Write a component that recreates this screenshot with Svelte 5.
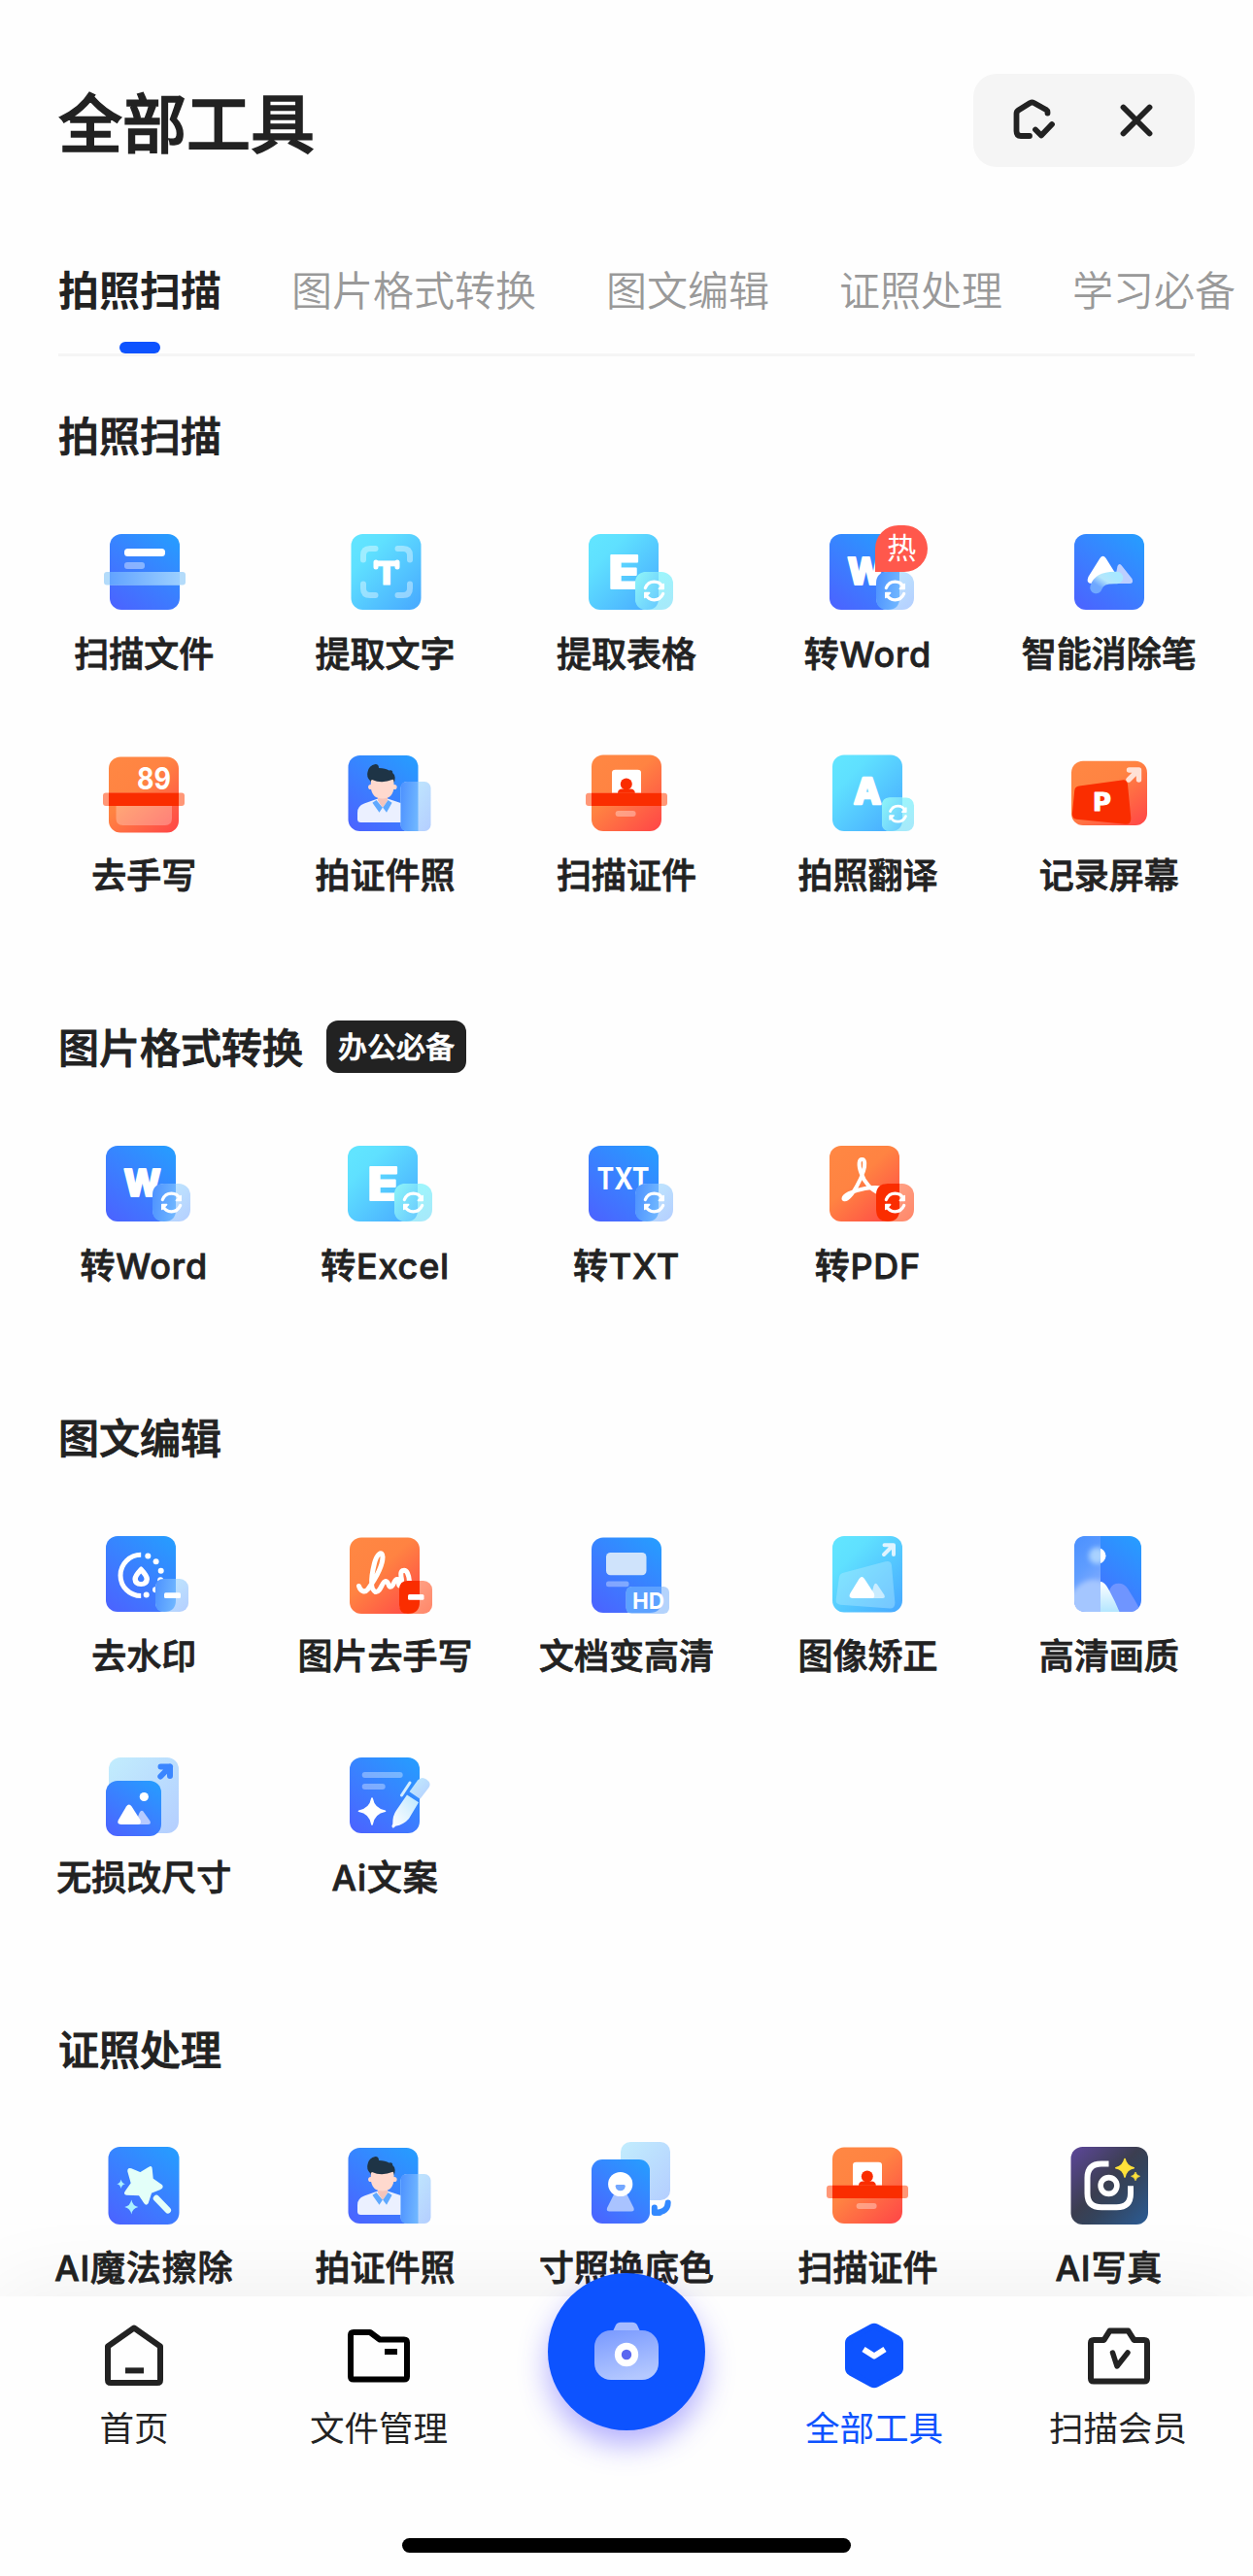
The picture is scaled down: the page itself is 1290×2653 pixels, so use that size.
<script>
  const tabs = ['拍照扫描', '图片格式转换', '图文编辑', '证照处理', '学习必备'];
  let activeTab = $state(0);

  const sections = [
    {
      title: '拍照扫描',
      tools: [
        { icon: 'scan', label: '扫描文件' },
        { icon: 'text', label: '提取文字' },
        { icon: 'excel', label: '提取表格' },
        { icon: 'word', label: '转Word', hot: true },
        { icon: 'eraser', label: '智能消除笔' },
        { icon: 'exam', label: '去手写' },
        { icon: 'portrait', label: '拍证件照' },
        { icon: 'idcard', label: '扫描证件' },
        { icon: 'translate', label: '拍照翻译' },
        { icon: 'record', label: '记录屏幕' }
      ]
    },
    {
      title: '图片格式转换',
      tag: '办公必备',
      tools: [
        { icon: 'word', label: '转Word' },
        { icon: 'excel', label: '转Excel' },
        { icon: 'txt', label: '转TXT' },
        { icon: 'pdf', label: '转PDF' }
      ]
    },
    {
      title: '图文编辑',
      tools: [
        { icon: 'watermark', label: '去水印' },
        { icon: 'handwriting', label: '图片去手写' },
        { icon: 'hd', label: '文档变高清' },
        { icon: 'correct', label: '图像矫正' },
        { icon: 'quality', label: '高清画质' },
        { icon: 'resize', label: '无损改尺寸' },
        { icon: 'copywriting', label: 'Ai文案' }
      ]
    },
    {
      title: '证照处理',
      tools: [
        { icon: 'magic', label: 'AI魔法擦除' },
        { icon: 'portrait', label: '拍证件照' },
        { icon: 'background', label: '寸照换底色' },
        { icon: 'idcard', label: '扫描证件' },
        { icon: 'aiphoto', label: 'AI写真' }
      ]
    }
  ];

  const navItems = [
    { icon: 'home', label: '首页' },
    { icon: 'folder', label: '文件管理' },
    { icon: 'camera' },
    { icon: 'tools', label: '全部工具' },
    { icon: 'member', label: '扫描会员' }
  ];
  let activeNav = $state('tools');

  const hasLatin = (label) => /[A-Za-z]/.test(label);
</script>

<!-- Shared gradients for the tool icons -->
<svg class="defs" width="0" height="0" aria-hidden="true">
  <defs>
    <linearGradient id="blue" x1="0.85" y1="0" x2="0.15" y2="1">
      <stop offset="0" stop-color="#279bff" />
      <stop offset="0.5" stop-color="#3a80ff" />
      <stop offset="1" stop-color="#4a65ff" />
    </linearGradient>
    <linearGradient id="cyan" x1="0.1" y1="0.1" x2="0.9" y2="0.95">
      <stop offset="0" stop-color="#61e4ff" />
      <stop offset="0.2" stop-color="#5fe0ff" />
      <stop offset="1" stop-color="#49adff" />
    </linearGradient>
    <linearGradient id="orange" x1="0.1" y1="0" x2="0.95" y2="1">
      <stop offset="0" stop-color="#ff8743" />
      <stop offset="0.4" stop-color="#ff8342" />
      <stop offset="1" stop-color="#ff4747" />
    </linearGradient>
    <linearGradient id="pale" x1="0" y1="0" x2="1" y2="1">
      <stop offset="0" stop-color="#c2edfd" />
      <stop offset="1" stop-color="#b4ceff" />
    </linearGradient>
    <linearGradient id="glassBlue" x1="0" y1="0.3" x2="1" y2="0.5">
      <stop offset="0" stop-color="#4f93ff" />
      <stop offset="1" stop-color="#6fb6ff" />
    </linearGradient>
    <linearGradient id="glassCyan" x1="0" y1="0" x2="1" y2="1">
      <stop offset="0" stop-color="#8ff6f8" />
      <stop offset="1" stop-color="#66c8ff" />
    </linearGradient>
    <linearGradient id="paleCyan" x1="0" y1="0" x2="0.6" y2="1">
      <stop offset="0" stop-color="#99fbfd" />
      <stop offset="1" stop-color="#a6eafa" />
    </linearGradient>
    <linearGradient id="paleOrange" x1="0" y1="0" x2="1" y2="1">
      <stop offset="0" stop-color="#ffab90" />
      <stop offset="1" stop-color="#ff8668" />
    </linearGradient>
    <linearGradient id="band" x1="0" y1="0" x2="1" y2="0">
      <stop offset="0" stop-color="#62a3ff" />
      <stop offset="1" stop-color="#9bcfff" />
    </linearGradient>
    <linearGradient id="brush" x1="1" y1="0" x2="0" y2="0.7">
      <stop offset="0" stop-color="#a9e8ff" />
      <stop offset="0.5" stop-color="#b5e6fb" />
      <stop offset="1" stop-color="#6fa8ff" />
    </linearGradient>
    <linearGradient id="peak" x1="0" y1="0" x2="0" y2="1">
      <stop offset="0" stop-color="#ffffff" />
      <stop offset="1" stop-color="#b4e6ff" />
    </linearGradient>
    <linearGradient id="pen" x1="1" y1="0" x2="0" y2="1">
      <stop offset="0" stop-color="#b9e7ff" />
      <stop offset="0.5" stop-color="#e0f3ff" />
      <stop offset="1" stop-color="#ffffff" />
    </linearGradient>
    <linearGradient id="frost" x1="0" y1="0" x2="0.3" y2="1">
      <stop offset="0" stop-color="#4a90ff" />
      <stop offset="0.5" stop-color="#5f9dff" />
      <stop offset="1" stop-color="#8eb2ff" />
    </linearGradient>
    <linearGradient id="night" x1="0" y1="0" x2="1" y2="1">
      <stop offset="0" stop-color="#5d479b" />
      <stop offset="0.45" stop-color="#3b3e50" />
      <stop offset="0.6" stop-color="#34435b" />
      <stop offset="1" stop-color="#2b5c95" />
    </linearGradient>
    <linearGradient id="lens" x1="0.2" y1="0" x2="0.5" y2="1">
      <stop offset="0" stop-color="#7b9bff" />
      <stop offset="1" stop-color="#b4c8ff" />
    </linearGradient>
    <filter id="soft" x="-40%" y="-40%" width="180%" height="180%">
      <feGaussianBlur stdDeviation="2.6" />
    </filter>
    <clipPath id="frostArea">
      <path d="M36 6H21Q9 6 9 18V72Q9 84 21 84H36Z" />
    </clipPath>
    <clipPath id="qualityCard">
      <rect x="36" y="6" width="42" height="78" />
    </clipPath>
    <clipPath id="qualityRound">
      <rect x="9" y="6" width="69" height="78" rx="12" />
    </clipPath>
  </defs>
</svg>

{#snippet arrows()}
  <g fill="none" stroke="#fff" stroke-width="3.2" stroke-linecap="round">
    <path d="M64.3 61.6C66.3 56.9 69.4 55.2 73.5 55.2C77.6 55.2 80.6 57.4 82 60.6" />
    <path d="M82.7 67.4C80.7 72.1 77.6 73.8 73.5 73.8C69.4 73.8 66.4 71.6 65 68.4" />
  </g>
  <path fill="#fff" stroke="#fff" stroke-width="1.6" stroke-linejoin="round" d="M83.2 57.6V62.4H78.4ZM63.8 71.4V66.6H68.6Z" />
{/snippet}

{#snippet syncBadge(tone)}
  {@const pale = { blue: 'url(#pale)', cyan: 'url(#paleCyan)', orange: 'url(#paleOrange)' }}
  {@const glass = { blue: 'url(#glassBlue)', cyan: 'url(#glassCyan)', orange: '#fa2d00' }}
  <rect x="54" y="45" width="39" height="39" rx="12" fill={pale[tone]} />
  <path d="M66 45H78V72Q78 84 66 84Q54 84 54 72V57Q54 45 66 45Z" fill={glass[tone]} />
  {@render arrows()}
{/snippet}

{#snippet toolIcon(name)}
  <svg class="tool-icon" viewBox="0 0 90 90" aria-hidden="true">
    {#if name === 'scan'}
      <rect x="10" y="6" width="72" height="78" rx="12" fill="url(#blue)" />
      <rect x="25" y="21" width="42" height="8" rx="3.5" fill="#fff" />
      <rect x="25" y="35" width="21" height="7" rx="3" fill="#fff" opacity="0.4" />
      <rect x="4" y="45" width="84" height="13.5" rx="3" fill="#b3dbfa" />
      <rect x="10" y="45" width="72" height="13.5" fill="url(#band)" />
    {:else if name === 'text'}
      <rect x="9.5" y="6" width="72" height="78" rx="12" fill="url(#cyan)" />
      <path
        d="M22 32.5V28Q22 21 29 21H34.5M57.5 21H63Q70 21 70 28V32.5M70 57.5V62Q70 69 63 69H57.5M34.5 69H29Q22 69 22 62V57.5"
        fill="none" stroke="#fff" stroke-width="6" stroke-linecap="round" opacity="0.4" />
      <text class="glyph" x="33.5" y="57.5" font-size="33" textLength="25" lengthAdjust="spacingAndGlyphs" stroke-width="1">T</text>
      <path d="M35 35V40M57 35V40" stroke="#fff" stroke-width="5" stroke-linecap="round" />
    {:else if name === 'excel'}
      <rect x="6" y="6" width="72" height="78" rx="12" fill="url(#cyan)" />
      <text class="glyph" x="26.5" y="62" font-size="46.5" textLength="32" lengthAdjust="spacingAndGlyphs" stroke-width="2">E</text>
      {@render syncBadge('cyan')}
    {:else if name === 'word'}
      <rect x="6" y="6" width="72" height="78" rx="12" fill="url(#blue)" />
      <text class="glyph" x="24.5" y="58.3" font-size="38.5" textLength="38" lengthAdjust="spacingAndGlyphs" stroke-width="2.2">W</text>
      {@render syncBadge('blue')}
    {:else if name === 'txt'}
      <rect x="6" y="6" width="72" height="78" rx="12" fill="url(#blue)" />
      <text class="glyph semi" x="14.5" y="51.3" font-size="31" textLength="54" lengthAdjust="spacingAndGlyphs">TXT</text>
      {@render syncBadge('blue')}
    {:else if name === 'pdf'}
      <rect x="6" y="6" width="72" height="78" rx="12" fill="url(#orange)" />
      <path
        d="M40 20C36 19 35.5 26 38.5 34C41.5 43 49 52 56.5 54C62 55.5 64 51 59 49.5C50 47.5 35 51 26 55C18 59 20 63 24 60.5C31 56 38.5 40 41 32C43 25 42.5 20.5 40 20Z"
        fill="none" stroke="#fff" stroke-width="4" stroke-linejoin="round" />
      {@render syncBadge('orange')}
    {:else if name === 'eraser'}
      <rect x="9" y="6" width="72" height="78" rx="12" fill="url(#blue)" />
      <path d="M53.5 39Q55.5 35 58.2 39L68.5 52Q70.5 57 66 57H50Z" fill="#bccfff" />
      <path d="M35.4 31Q38.5 26.5 41.6 31L53.5 50Q56 57 50 57H27Q20.5 57 23.5 50Z" fill="#fff" />
      <path d="M31.5 61C34 53 41 50.5 53 51" fill="none" stroke="url(#brush)" stroke-width="12.5" stroke-linecap="round" />
    {:else if name === 'exam'}
      <rect x="9" y="7.5" width="72" height="78" rx="12" fill="url(#orange)" />
      <text class="glyph semi" x="38" y="40.8" font-size="31" textLength="35" lengthAdjust="spacingAndGlyphs">89</text>
      <rect x="3" y="44.5" width="84" height="13.5" rx="3" fill="#ff9777" />
      <rect x="9" y="44.5" width="72" height="13.5" fill="#fa2d00" />
      <path d="M16.5 58H74V71Q74 78 67 78H23.5Q16.5 78 16.5 71Z" fill="#fff" opacity="0.28" />
    {:else if name === 'portrait'}
      <rect x="6.5" y="6" width="72" height="78" rx="12" fill="url(#blue)" />
      <path d="M16 71.5V65Q16 58 23 55.5L37 50.5H47L62 55.5V75H19.5Q16 75 16 71.5Z" fill="#ebf0ff" />
      <path d="M37 46H47V52.5L42 60L37 52.5Z" fill="#f5c4bb" />
      <path d="M35.5 52L31.4 54.8L38.5 64.7L42 59.5L46 64.7L51.6 54.8L47.5 52L42 60Z" fill="#5fa9ff" />
      <circle cx="29.7" cy="38.5" r="2.6" fill="#ffd6cb" />
      <circle cx="54" cy="38.5" r="2.6" fill="#ffd6cb" />
      <path d="M29.8 30H53.5V39Q52.5 50.5 41.7 50.5Q31 50.5 29.8 39Z" fill="#ffd9ce" />
      <path d="M29 34.5V32Q25 28 26.5 23Q27.5 16.5 34.5 15Q38 15.2 38 19Q45 19.3 48.5 21.5Q52.5 20.5 52.2 24Q55 26 54.7 29L54 34.5Q53.3 31 52.5 30.8Q41 35.5 31 31Q29.3 31.5 29 34.5Z" fill="#1e3446" />
      <rect x="60.5" y="33" width="31" height="51" rx="6.5" fill="url(#pale)" />
      <path d="M67 33H78.5V84H67Q60.5 84 60.5 77.5V39.5Q60.5 33 67 33Z" fill="url(#glassBlue)" />
    {:else if name === 'idcard'}
      <rect x="9" y="5.5" width="72" height="78.5" rx="12" fill="url(#orange)" />
      <path d="M30 45V24Q30 20.7 33.5 20.7H56.5Q60 20.7 60 24V45Z" fill="#fff" />
      <circle cx="44.8" cy="35.5" r="6" fill="#fa2d00" />
      <path d="M36 45Q36 40.5 40.5 40.5H49Q53.8 40.5 53.8 45Z" fill="#fa2d00" />
      <rect x="3" y="44.7" width="84" height="13.3" rx="3" fill="#ff9777" />
      <rect x="9" y="44.7" width="72" height="13.3" fill="#fa2d00" />
      <rect x="33.6" y="63" width="21" height="6" rx="3" fill="#fff" opacity="0.35" />
    {:else if name === 'translate'}
      <rect x="9" y="5.5" width="72" height="78.5" rx="12" fill="url(#cyan)" />
      <text class="glyph" x="31" y="55.5" font-size="37" textLength="28" lengthAdjust="spacingAndGlyphs" stroke-width="2.6">A</text>
      <rect x="60" y="49.5" width="33" height="34.5" rx="8" fill="url(#paleCyan)" />
      <path d="M68 49.5H81V72Q81 84 69 84H68Q60 84 60 76V57.5Q60 49.5 68 49.5Z" fill="url(#glassCyan)" />
      <g transform="translate(12.5 10) scale(0.87)">{@render arrows()}</g>
    {:else if name === 'record'}
      <rect x="6" y="11.7" width="78" height="66.3" rx="12" fill="url(#orange)" />
      <path d="M14 37.5L58 31.4Q63.5 30.6 64 36L67.3 70.5Q67.6 77.3 61.5 76.8L11.5 71.8Q6.5 71 6.9 66L9.2 42.5Q9.6 38.2 14 37.5Z" fill="#fa2d00" />
      <text class="glyph" x="28.8" y="63" font-size="25.5" textLength="18" lengthAdjust="spacingAndGlyphs" stroke-width="1">P</text>
      <path d="M65 31L74 22M65.5 21H75.5V31" fill="none" stroke="#ffe1d6" stroke-width="5.4" stroke-linecap="round" stroke-linejoin="round" />
    {:else if name === 'watermark'}
      <rect x="6" y="6" width="72" height="78" rx="12" fill="url(#blue)" />
      <path d="M42.2 25.2A21.2 21.2 0 0 0 42.2 67.6" fill="none" stroke="#fff" stroke-width="5" />
      <g fill="#fff">
        <circle cx="49.3" cy="26.4" r="3" />
        <circle cx="57.6" cy="32.3" r="3" />
        <circle cx="62.7" cy="41.7" r="3" />
        <circle cx="62.2" cy="51.3" r="3" />
        <circle cx="57" cy="61.3" r="3" />
        <circle cx="47.7" cy="66.4" r="3" />
        <path fill-rule="evenodd" d="M42.2 37.3Q43.3 37.3 44.3 38.8Q51 46 51 50.3Q50.5 58 42.2 58Q33.8 58 33.4 50.3Q33.4 46 40.2 38.8Q41.2 37.3 42.2 37.3ZM42.2 44.5Q38.9 48 38.9 50.2Q39.2 53 42.2 53Q45.2 53 45.5 50.2Q45.5 48 42.2 44.5Z" />
      </g>
      <rect x="57" y="50" width="34" height="34" rx="9" fill="url(#pale)" />
      <path d="M66 50H78V72Q78 84 66 84Q57 84 57 75V59Q57 50 66 50Z" fill="url(#glassBlue)" />
      <rect x="66" y="64.3" width="17" height="5.7" rx="1.5" fill="#fff" />
    {:else if name === 'handwriting'}
      <rect x="8" y="7.5" width="72" height="78.5" rx="12" fill="url(#orange)" />
      <path
        d="M17.5 57.5C19 62.5 23.5 65 27 60.5C33 52 42 38 42 27.5C41.5 20 36 24.5 33.5 34C31 44 28 60 34.5 63.5C40 64.5 41.5 52 45 52.5C49 53 47 59.5 51 58C54 56 54 50 57 50.5C61 51.5 56 58 61 57C64 54 58 44 62.5 41.5C67 40 69 46 69.5 53"
        fill="none" stroke="#fff" stroke-width="5" stroke-linecap="round" stroke-linejoin="round" />
      <rect x="59" y="52" width="34" height="34" rx="9" fill="url(#paleOrange)" />
      <path d="M68 52H80V74Q80 86 68 86Q59 86 59 77V61Q59 52 68 52Z" fill="#fa2d00" />
      <rect x="68" y="66" width="16.5" height="5.7" rx="1.5" fill="#fff" />
    {:else if name === 'hd'}
      <rect x="9" y="7.5" width="72" height="77.5" rx="12" fill="url(#blue)" />
      <rect x="24" y="23" width="41.5" height="23.3" rx="4.5" fill="#cfe3fb" />
      <rect x="24" y="52.5" width="23.5" height="5.7" rx="2.5" fill="#fff" opacity="0.35" />
      <rect x="44.6" y="58" width="44.4" height="28" rx="6" fill="#b4d3fc" />
      <path d="M50.6 58H81V73Q81 85 69 85H47Q44.6 83 44.6 80V64Q44.6 58 50.6 58Z" fill="#5ca1ff" />
      <text class="glyph semi" x="51" y="80.6" font-size="23" textLength="33" lengthAdjust="spacingAndGlyphs">HD</text>
    {:else if name === 'correct'}
      <rect x="9" y="6" width="72" height="78.5" rx="12" fill="url(#cyan)" />
      <path d="M19.5 44L63.5 32.3Q69.5 31 70 36.5L73.4 74.5Q73.5 80.8 68 80.5L17 76.7Q12.3 76 12.7 71.5L15.8 49Q16.3 45 19.5 44Z" fill="#b6ecff" opacity="0.4" />
      <path d="M51.5 57.3Q53 53.2 55.3 56L62.3 66.5Q64 70 60.5 70H48Z" fill="#c9ecff" />
      <path d="M36.5 50Q39.3 46.2 42 50L51.8 65Q53.5 70 49.5 70H29.5Q25 69.5 27.3 65Z" fill="#fff" />
      <path d="M62 25L71.5 15.5M62.5 15.2H72V25" fill="none" stroke="#dff4ff" stroke-width="4" stroke-linecap="round" stroke-linejoin="round" />
    {:else if name === 'quality'}
      <rect x="9" y="6" width="69" height="78" rx="12" fill="url(#blue)" />
      <g clip-path="url(#qualityCard)">
        <g clip-path="url(#qualityRound)">
          <circle cx="33.5" cy="26.3" r="8" fill="#fff" />
          <path d="M36 84L46 60Q48.5 54.7 54.5 54.7Q60.5 54.7 64 60Q71 71 78 84Z" fill="#6f95ff" />
          <path d="M30 53H37Q41 54 45 62Q51 73 55.5 84H30Z" fill="url(#peak)" />
        </g>
      </g>
      <path d="M36 6H21Q9 6 9 18V72Q9 84 21 84H36Z" fill="url(#frost)" />
      <g clip-path="url(#frostArea)">
        <circle cx="32.5" cy="26.3" r="8.5" fill="#a9d2ff" filter="url(#soft)" />
        <path d="M4 90V68Q16 50 30 51L42 54V90Z" fill="#a4c6ff" filter="url(#soft)" />
      </g>
    {:else if name === 'resize'}
      <rect x="9" y="6" width="72" height="78" rx="12" fill="url(#pale)" />
      <path d="M62.3 25.5L72 15.5M62.5 15.5H72V25" fill="none" stroke="#3b86ff" stroke-width="6" stroke-linecap="round" stroke-linejoin="round" />
      <rect x="6" y="30" width="57" height="57" rx="12" fill="url(#blue)" />
      <circle cx="45.3" cy="46.5" r="4.6" fill="#fff" />
      <path d="M40.5 63Q43 58.5 45.5 63L51.5 71.5Q53 75 49 75H36Z" fill="#b5caff" />
      <path d="M27 56.5Q29.8 52.5 32.6 56.5L41.5 70.5Q43 75 38.5 75H21.5Q17 74.5 18.8 70.5Z" fill="#fff" />
    {:else if name === 'copywriting'}
      <rect x="8" y="6" width="72" height="78" rx="12" fill="url(#blue)" />
      <rect x="20.7" y="21" width="42" height="6" rx="3" fill="#fff" opacity="0.35" />
      <rect x="20.7" y="33" width="24" height="6" rx="3" fill="#fff" opacity="0.35" />
      <path d="M31 48Q33 59.3 44.5 61.3Q33 63.3 31 75Q29 63.3 17.5 61.3Q29 59.3 31 48Z" fill="#fff" stroke="#fff" stroke-width="1.6" stroke-linejoin="round" />
      <path d="M70 32L61.5 45" stroke="#d3edff" stroke-width="3" stroke-linecap="round" />
      <path d="M67 44.5L79 52.3L69 69Q64 75 55 76.8Q53.5 79.5 51.8 78Q50.8 76.5 52.3 74.5Q52 66 56 60.5Z" fill="url(#pen)" />
      <path d="M69.5 41.2L78 29.5Q82 25 87 28.5Q92.5 32.5 89.5 37L80.5 48.8Z" fill="url(#pale)" />
    {:else if name === 'magic'}
      <rect x="8.5" y="5" width="73" height="80" rx="12" fill="url(#blue)" />
      <path
        d="M50.5 26.5Q53 24.3 53 28L54 38L63.3 44.5Q65 46.6 62 48.2L52.5 52L49 62.8Q47.5 65 46 62.8L40.5 54.5L27.5 54Q24.5 53.3 26.5 51L32.5 42.5L29 30Q29 26.8 32 28L41.5 32Z"
        fill="#e3fff9" stroke="#e3fff9" stroke-width="1.5" stroke-linejoin="round" />
      <path d="M58 58L69.8 70.3" stroke="#e3fff9" stroke-width="6.5" stroke-linecap="round" />
      <path d="M21.6 38.5Q22.3 42.6 26 43.3Q22.3 44 21.6 48Q20.9 44 17.2 43.3Q20.9 42.6 21.6 38.5Z" fill="#a9f1ff" />
      <path d="M32.3 59.5Q33.5 65.8 39.3 67Q33.5 68.2 32.3 74.5Q31.1 68.2 25.3 67Q31.1 65.8 32.3 59.5Z" fill="#a9f1ff" />
    {:else if name === 'background'}
      <rect x="39" y="0" width="51" height="60" rx="10" fill="url(#pale)" />
      <path d="M87.7 62.5Q87.5 72.5 74.5 72.8M73.8 67.5V73H79" fill="none" stroke="#3389ff" stroke-width="6" stroke-linecap="round" stroke-linejoin="round" />
      <rect x="9" y="18" width="60" height="66" rx="11" fill="url(#blue)" />
      <path d="M32.5 53H45L52.5 68Q53.5 71.5 50 71.5H27.5Q24 71.5 25 68Z" fill="#a9c3ff" />
      <circle cx="38.7" cy="43.5" r="12.6" fill="#fff" />
      <path d="M33.6 45.5Q33.6 44 35 44H42.4Q43.8 44 43.8 45.5Q43 50.3 38.7 50.3Q34.4 50.3 33.6 45.5Z" fill="#73a7ff" />
    {:else if name === 'aiphoto'}
      <rect x="5.5" y="5" width="79.5" height="80" rx="12" fill="url(#night)" />
      <path d="M44.5 22.5H37Q22.5 22.5 22.5 37V53Q22.5 67.3 37 67.3H52.5Q67 67.3 67 53V45.3" fill="none" stroke="#fff" stroke-width="6" />
      <circle cx="44.5" cy="45" r="8.4" fill="none" stroke="#fff" stroke-width="5.6" />
      <path d="M61 17.5Q62.5 25.2 70.3 26.7Q62.5 28.2 61 36Q59.5 28.2 51.8 26.7Q59.5 25.2 61 17.5Z" fill="#ffe13a" stroke="#ffe13a" stroke-width="1.6" stroke-linejoin="round" />
      <path d="M72 31Q72.8 34.6 76.5 35.3Q72.8 36 72 39.8Q71.2 36 67.6 35.3Q71.2 34.6 72 31Z" fill="#ffe13a" stroke="#ffe13a" stroke-width="0.8" />
    {/if}
  </svg>
{/snippet}

{#snippet navIcon(name)}
  <svg class="nav-icon" viewBox="0 0 72 72" fill="none" stroke="currentColor" stroke-width="6" stroke-linejoin="round" aria-hidden="true">
    {#if name === 'home'}
      <path d="M9 27.5L36 8.5L63 27.5V62Q63 65 60 65H12Q9 65 9 62Z" />
      <path d="M27 52.4H46" />
    {:else if name === 'folder'}
      <g stroke="#000">
        <path d="M10 13H27L37 20.5H62Q65 20.5 65 23.5V58.5Q65 61.5 62 61.5H10Q7 61.5 7 58.5V16Q7 13 10 13Z" />
        <path d="M42 33H55" />
      </g>
    {:else if name === 'tools'}
      <path d="M33.5 7.4Q36 6 38.5 7.4L60.5 19.5Q63 21 63 24V50Q63 53 60.5 54.5L38.5 66.6Q36 68 33.5 66.6L11.5 54.5Q9 53 9 50V24Q9 21 11.5 19.5Z" fill="currentColor" />
      <path d="M25 30.5L36 37.5L47 30.5" stroke="#fff" stroke-width="6" />
    {:else if name === 'member'}
      <path d="M11 21H21.5L27.5 11.5H46.5L52.5 21H63Q66 21 66 24V60.5Q66 63.5 63 63.5H11Q8 63.5 8 60.5V24Q8 21 11 21Z" />
      <path d="M30.5 34L35 48L46 34" stroke-width="5.5" stroke-linecap="round" />
    {/if}
  </svg>
{/snippet}

<div class="page">
  <header class="header">
    <h1>全部工具</h1>
    <div class="capsule">
      <button aria-label="返回首页">
        <svg viewBox="0 0 48 48" fill="none" stroke="currentColor" stroke-width="5.8" stroke-linecap="round" stroke-linejoin="round">
          <path d="M38.5 16.5V15.5Q38.5 14 37 13L24.5 6Q22.5 5 20.5 6L8.5 13.5Q6.5 14.8 6.5 17V35Q6.5 40 11 40H20" />
          <path d="M26 33.5L32 39.5L43 28" />
        </svg>
      </button>
      <button aria-label="关闭">
        <svg viewBox="0 0 48 48" fill="none" stroke="currentColor" stroke-width="5.8" stroke-linecap="round">
          <path d="M10.5 10.5L37.5 37.5M37.5 10.5L10.5 37.5" />
        </svg>
      </button>
    </div>
  </header>

  <nav class="tabs">
    {#each tabs as tab, i}
      <button class="tab" class:active={activeTab === i} onclick={() => (activeTab = i)}>
        {tab}
        <span class="indicator"></span>
      </button>
    {/each}
  </nav>

  <main>
    {#each sections as section}
      <section>
        <div class="section-head">
          <h2>{section.title}</h2>
          {#if section.tag}
            <span class="tag">{section.tag}</span>
          {/if}
        </div>
        <div class="grid">
          {#each section.tools as tool}
            <button class="tool">
              {@render toolIcon(tool.icon)}
              <span class="tool-label" class:latin={hasLatin(tool.label)}>{tool.label}</span>
              {#if tool.hot}
                <span class="hot">热</span>
              {/if}
            </button>
          {/each}
        </div>
      </section>
    {/each}
  </main>

  <footer class="bottom-nav">
    <div class="nav-row">
      {#each navItems as item}
        {#if item.icon === 'camera'}
          <button class="fab" aria-label="拍照">
            <svg viewBox="0 0 72 72" aria-hidden="true">
              <path d="M21 17L25 8.5Q26.5 5.7 30 5.7H42Q45.5 5.7 47 8.5L51 17Z" fill="#a5bbff" />
              <rect x="3" y="14" width="66" height="51" rx="17" fill="url(#lens)" />
              <circle cx="36" cy="39" r="12.2" fill="#fff" />
              <circle cx="36" cy="39" r="5.2" fill="#5a67f0" />
            </svg>
          </button>
        {:else}
          <button class="nav-item" class:active={activeNav === item.icon} onclick={() => (activeNav = item.icon)}>
            {@render navIcon(item.icon)}
            <span>{item.label}</span>
          </button>
        {/if}
      {/each}
    </div>
    <div class="home-bar"></div>
  </footer>
</div>

<style>
  :global(body) {
    margin: 0;
    background: #fff;
  }

  .page {
    position: relative;
    width: 1290px;
    height: 2653px;
    overflow: hidden;
    background: #fefefe;
    color: #222;
    font-family: Inter, "Noto Sans CJK SC", sans-serif;
  }

  .defs {
    position: absolute;
  }

  button {
    padding: 0;
    border: none;
    background: none;
    color: inherit;
    font: inherit;
    cursor: pointer;
  }

  h1,
  h2 {
    margin: 0;
  }

  /* a touch heavier than the medium cut */
  h1,
  h2,
  .tag,
  .tool-label {
    font-weight: 500;
    -webkit-text-stroke: 0.022em currentColor;
  }

  .header {
    display: flex;
    justify-content: space-between;
    height: 96px;
    padding: 76px 60px 0;
  }

  h1 {
    padding-top: 4px;
    font-size: 66px;
    line-height: 96px;
  }

  .capsule {
    display: flex;
    align-items: center;
    justify-content: space-between;
    box-sizing: border-box;
    width: 228px;
    height: 96px;
    padding: 0 36px 0 38px;
    border-radius: 24px;
    background: #f5f5f5;
  }

  .capsule svg {
    display: block;
    width: 48px;
    height: 48px;
  }

  .tabs {
    display: flex;
    gap: 72px;
    margin: 92px 60px 0;
    border-bottom: 3px solid #f5f5f5;
    white-space: nowrap;
  }

  .tab {
    display: flex;
    flex-direction: column;
    flex-shrink: 0;
    align-items: center;
    gap: 16px;
    font-size: 42px;
    font-weight: 350;
    line-height: 72px;
    color: #999;
  }

  .tab.active {
    font-weight: 600;
    color: #222;
  }

  .indicator {
    width: 42px;
    height: 12px;
    border-radius: 6px;
  }

  .tab.active .indicator {
    background: #0d53ff;
  }

  main {
    display: flex;
    flex-direction: column;
    gap: 126px;
    padding-top: 53px;
  }

  .section-head {
    display: flex;
    align-items: center;
    gap: 24px;
    height: 60px;
    padding: 0 60px;
    margin-bottom: 64px;
  }

  h2 {
    font-size: 42px;
    line-height: 60px;
  }

  .tag {
    margin-top: -4px;
    padding: 0 12px;
    border-radius: 12px;
    background: #222;
    color: #fff;
    font-size: 30px;
    line-height: 54px;
  }

  .grid {
    display: grid;
    grid-template-columns: repeat(5, 1fr);
    row-gap: 74px;
    padding: 0 24px;
    margin-bottom: -2px;
  }

  .tool {
    position: relative;
    display: flex;
    flex-direction: column;
    align-items: center;
    gap: 16px;
  }

  .tool-icon {
    display: block;
    width: 90px;
    height: 90px;
    overflow: visible;
  }

  .tool-label {
    font-size: 36px;
    line-height: 48px;
    white-space: nowrap;
  }

  .tool-label.latin {
    letter-spacing: 0.8px;
  }

  .glyph {
    fill: #fff;
    stroke: #fff;
    stroke-linejoin: round;
    font-family: Inter, sans-serif;
    font-weight: 800;
  }

  .glyph.semi {
    stroke: none;
    font-weight: 700;
  }

  .hot {
    position: absolute;
    top: -3px;
    left: 132px;
    height: 48px;
    padding: 0 12px;
    border-radius: 24px 24px 24px 0;
    background: #ff584c;
    color: #fff;
    font-size: 30px;
    line-height: 46px;
  }

  .bottom-nav {
    position: absolute;
    right: 0;
    bottom: 0;
    left: 0;
    height: 288px;
    background: #fefefe;
    box-shadow: 0 0 90px rgba(0, 0, 0, 0.07);
  }

  .nav-row {
    display: grid;
    grid-template-columns: 252px 252px 258px 252px 250px;
    padding: 0 14px 0 12px;
    height: 249px;
    align-items: start;
  }

  .nav-item {
    display: flex;
    flex-direction: column;
    align-items: center;
    gap: 17px;
    padding-top: 24px;
    font-size: 35.5px;
    line-height: 48px;
  }

  .nav-item.active {
    color: #0d53ff;
  }

  .nav-icon {
    display: block;
    width: 72px;
    height: 72px;
  }

  .fab {
    display: flex;
    align-items: center;
    justify-content: center;
    justify-self: center;
    width: 162px;
    height: 162px;
    margin-top: -24px;
    border-radius: 50%;
    background: #0d53ff;
    box-shadow: 0 15px 30px rgba(70, 60, 255, 0.4);
  }

  .fab svg {
    width: 72px;
    height: 72px;
  }

  .home-bar {
    width: 462px;
    height: 15px;
    margin: 0 auto;
    border-radius: 8px;
    background: #000;
  }
</style>
